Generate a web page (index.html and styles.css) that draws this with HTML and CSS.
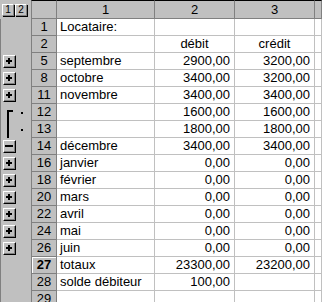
FILE: index.html
```html
<!DOCTYPE html>
<html lang="fr">
  <head>
    <meta charset="UTF-8" />
    <title>Loyers</title>
    <link rel="stylesheet" href="styles.css">
  </head>
  <body>
    <div class="sheet">
      <div class="row head">
        <div class="outline levels"><span class="lvl">1</span><span class="lvl">2</span></div>
        <div class="rh corner"></div>
        <div class="ch">1</div>
        <div class="ch">2</div>
        <div class="ch">3</div>
        <div class="ch"></div>
      </div>

      <div class="row">
        <div class="outline"></div>
        <div class="rh">1</div>
        <div class="c">Locataire:</div><div class="c"></div><div class="c"></div><div class="c"></div>
      </div>
      <div class="row">
        <div class="outline"></div>
        <div class="rh">2</div>
        <div class="c"></div><div class="c mid">débit</div><div class="c mid">crédit</div><div class="c"></div>
      </div>
      <div class="row">
        <div class="outline"><span class="btn plus"></span></div>
        <div class="rh">5</div>
        <div class="c">septembre</div><div class="c num">2900,00</div><div class="c num">3200,00</div><div class="c"></div>
      </div>
      <div class="row">
        <div class="outline"><span class="btn plus"></span></div>
        <div class="rh">8</div>
        <div class="c">octobre</div><div class="c num">3400,00</div><div class="c num">3200,00</div><div class="c"></div>
      </div>
      <div class="row">
        <div class="outline"><span class="btn plus"></span></div>
        <div class="rh">11</div>
        <div class="c">novembre</div><div class="c num">3400,00</div><div class="c num">3400,00</div><div class="c"></div>
      </div>
      <div class="row">
        <div class="outline"><span class="bracket first"></span><span class="dot"></span></div>
        <div class="rh">12</div>
        <div class="c"></div><div class="c num">1600,00</div><div class="c num">1600,00</div><div class="c"></div>
      </div>
      <div class="row">
        <div class="outline"><span class="bracket"></span><span class="dot"></span></div>
        <div class="rh">13</div>
        <div class="c"></div><div class="c num">1800,00</div><div class="c num">1800,00</div><div class="c"></div>
      </div>
      <div class="row">
        <div class="outline"><span class="btn minus"></span></div>
        <div class="rh">14</div>
        <div class="c">décembre</div><div class="c num">3400,00</div><div class="c num">3400,00</div><div class="c"></div>
      </div>
      <div class="row">
        <div class="outline"><span class="btn plus"></span></div>
        <div class="rh">16</div>
        <div class="c">janvier</div><div class="c num">0,00</div><div class="c num">0,00</div><div class="c"></div>
      </div>
      <div class="row">
        <div class="outline"><span class="btn plus"></span></div>
        <div class="rh">18</div>
        <div class="c">février</div><div class="c num">0,00</div><div class="c num">0,00</div><div class="c"></div>
      </div>
      <div class="row">
        <div class="outline"><span class="btn plus"></span></div>
        <div class="rh">20</div>
        <div class="c">mars</div><div class="c num">0,00</div><div class="c num">0,00</div><div class="c"></div>
      </div>
      <div class="row">
        <div class="outline"><span class="btn plus"></span></div>
        <div class="rh">22</div>
        <div class="c">avril</div><div class="c num">0,00</div><div class="c num">0,00</div><div class="c"></div>
      </div>
      <div class="row">
        <div class="outline"><span class="btn plus"></span></div>
        <div class="rh">24</div>
        <div class="c">mai</div><div class="c num">0,00</div><div class="c num">0,00</div><div class="c"></div>
      </div>
      <div class="row">
        <div class="outline"><span class="btn plus"></span></div>
        <div class="rh">26</div>
        <div class="c">juin</div><div class="c num">0,00</div><div class="c num">0,00</div><div class="c"></div>
      </div>
      <div class="row">
        <div class="outline"></div>
        <div class="rh active">27</div>
        <div class="c">totaux</div><div class="c num">23300,00</div><div class="c num">23200,00</div><div class="c"></div>
      </div>
      <div class="row">
        <div class="outline"></div>
        <div class="rh">28</div>
        <div class="c">solde débiteur</div><div class="c num">100,00</div><div class="c"></div><div class="c"></div>
      </div>
      <div class="row">
        <div class="outline"></div>
        <div class="rh">29</div>
        <div class="c"></div><div class="c"></div><div class="c"></div><div class="c"></div>
      </div>
    </div>
  </body>
</html>
```

FILE: styles.css
```css
/* Excel 5 style sheet with outline */
html, body {
  margin: 0;
  padding: 0;
  background: #fff;
  overflow: hidden;
}

.sheet {
  width: 322px;
  height: 302px;
  overflow: hidden;
  font-family: "Liberation Sans", Arial, sans-serif;
  font-size: 13px;
  color: #000;
}

.row {
  display: grid;
  grid-template-columns: 31px 26px 98px 80px 80px 1fr;
  height: 17px;
}

.row.head {
  height: 19px;
}

.outline {
  position: relative;
  background: #c0c0c0;
  border-left: 1px solid #808080;
}

.levels {
  display: flex;
  gap: 1px;
  padding: 4px 0 0 2px;
  border-left: none;
}

.lvl {
  width: 10px;
  height: 10px;
  border: 1px solid;
  border-color: #fff #808080 #808080 #fff;
  background: #c0c0c0;
  font-size: 10px;
  line-height: 10px;
  text-align: center;
  box-shadow: 1px 1px 0 #000;
}

.btn {
  position: absolute;
  left: 2px;
  top: 2px;
  width: 11px;
  height: 11px;
  border: 1px solid;
  border-color: #fff #000 #000 #fff;
  box-shadow: inset -1px -1px 0 #808080;
  background: #c0c0c0;
}

.btn::before,
.btn::after {
  content: "";
  position: absolute;
  background: #000;
}

/* horizontal bar of + and - */
.btn::before {
  left: 2px;
  top: 4px;
  width: 6px;
  height: 2px;
}

.plus::after {
  left: 4px;
  top: 2px;
  width: 2px;
  height: 6px;
}

.minus::before {
  left: 1px;
  width: 8px;
}

.bracket {
  position: absolute;
  left: 6px;
  top: 0;
  width: 2px;
  height: 17px;
  background: #000;
}

.bracket.first {
  top: 6px;
  height: 11px;
}

.bracket.first::after {
  content: "";
  position: absolute;
  left: 0;
  top: 0;
  width: 6px;
  height: 2px;
  background: #000;
}

.dot {
  position: absolute;
  left: 20px;
  top: 8px;
  width: 2px;
  height: 2px;
  background: #000;
}

.rh {
  background: #c0c0c0;
  border-left: 1px solid #808080;
  border-right: 1px solid #808080;
  border-bottom: 1px solid #808080;
  box-sizing: border-box;
  text-align: center;
  line-height: 16px;
  font-size: 13px;
}

.rh.corner {
  border-bottom: 1px solid #808080;
  border-top: 1px solid #000;
}

.rh.active {
  font-weight: bold;
  box-shadow: inset 1px 1px 0 #fff;
}

.ch {
  background: #c0c0c0;
  border-top: 1px solid #000;
  border-right: 1px solid #808080;
  border-bottom: 1px solid #808080;
  box-sizing: border-box;
  text-align: center;
  line-height: 17px;
}

.c {
  border-right: 1px solid #c0c0c0;
  border-bottom: 1px solid #c0c0c0;
  box-sizing: border-box;
  padding: 0 3px;
  line-height: 16px;
  white-space: nowrap;
  overflow: visible;
}

.c.num {
  text-align: right;
  padding-right: 4px;
}

.c.mid {
  text-align: center;
}
```
